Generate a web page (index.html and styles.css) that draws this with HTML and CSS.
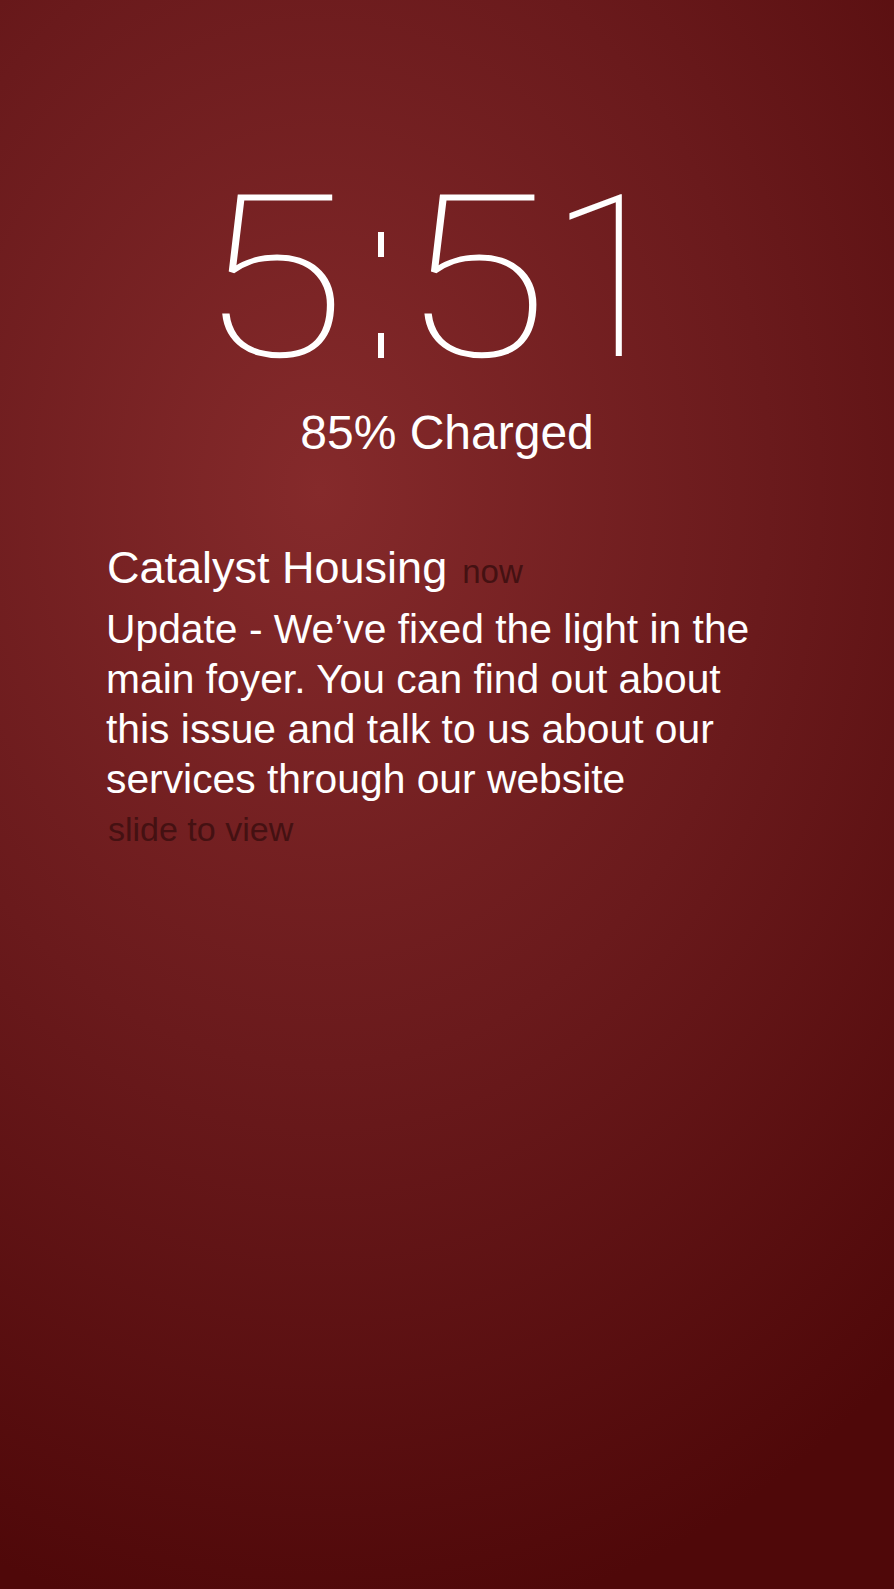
FILE: index.html
```html
<!DOCTYPE html>
<html lang="en">
<head>
<meta charset="utf-8">
<title>Lock screen</title>
<link rel="stylesheet" href="styles.css">
</head>
<body>
<main class="screen">
  <div class="clock"><span class="digit d5a">5</span><span class="colon">:</span><span class="digit d5b">5</span><span class="digit d1">1</span></div>
  <div class="battery">85% Charged</div>
  <section class="note">
    <div class="note-head"><span class="app">Catalyst Housing</span><span class="when">now</span></div>
    <p class="msg">Update - We’ve fixed the light in the<br>main foyer. You can find out about<br>this issue and talk to us about our<br>services through our website</p>
    <div class="hint">slide to view</div>
  </section>
</main>
</body>
</html>
```
FILE: styles.css
```css
html, body {
  margin: 0;
  padding: 0;
}
body {
  width: 894px;
  height: 1589px;
  overflow: hidden;
  background-color: #5a1012;
  background-image: radial-gradient(ellipse 900px 1150px at 320px 490px, #852a2b 0%, #6a1a1c 50%, #4f0809 100%);
  font-family: "Liberation Sans", Arial, sans-serif;
  color: #fff;
}
.screen {
  display: flex;
  flex-direction: column;
  padding-top: 178px;
}
.clock {
  display: flex;
  padding-left: 210px;
  height: 200px;
  font-family: Roboto, "Liberation Sans", sans-serif;
  font-weight: 100;
  font-size: 227px;
  line-height: 200px;
}
.digit {
  display: block;
  text-align: center;
}
.d5a {
  width: 120px;
  transform: scaleX(1.2);
}
.d5b {
  width: 118px;
  transform: scaleX(1.2);
}
.d1 {
  width: 162px;
}
.colon {
  display: block;
  position: relative;
  width: 82px;
  color: transparent;
  text-align: center;
}
.colon::before,
.colon::after {
  content: "";
  position: absolute;
  left: 48px;
  width: 6px;
  height: 25px;
  background: #fff;
}
.colon::before {
  top: 54px;
}
.colon::after {
  top: 155px;
}
.battery {
  margin-top: 27px;
  font-size: 48px;
  line-height: 56px;
  text-align: center;
}
.note {
  margin-top: 82px;
  padding-left: 106px;
}
.note-head {
  display: flex;
  align-items: baseline;
  gap: 15px;
  line-height: 50px;
}
.app {
  font-size: 45px;
  padding-left: 1px;
}
.when {
  font-size: 33px;
  color: #441112;
}
.msg {
  margin: 7px 0 0;
  font-size: 40.8px;
  line-height: 50px;
}
.hint {
  margin-top: 5px;
  padding-left: 2px;
  font-size: 34px;
  line-height: 40px;
  color: #441112;
}
```
